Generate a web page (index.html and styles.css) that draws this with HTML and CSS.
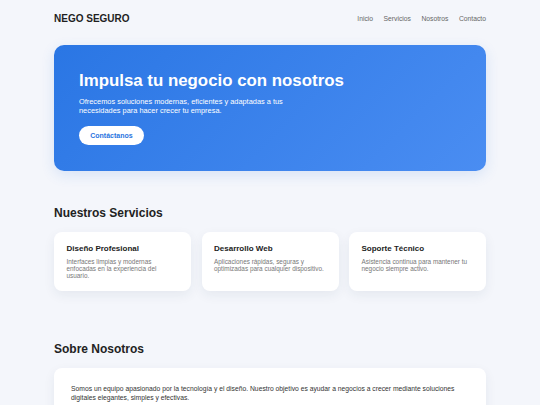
FILE: index.html
```html
<!DOCTYPE html>
<html lang="es">
<head>
<meta charset="utf-8">
<title>Nego Seguro</title>
<link rel="stylesheet" href="styles.css">
</head>
<body>
<div class="container">
  <header class="header">
    <div class="logo">NEGO SEGURO</div>
    <nav class="nav">
      <a href="#">Inicio</a>
      <a href="#">Servicios</a>
      <a href="#">Nosotros</a>
      <a href="#">Contacto</a>
    </nav>
  </header>

  <section class="hero">
    <h1 class="hero-title">Impulsa tu negocio con nosotros</h1>
    <p class="hero-text">Ofrecemos soluciones modernas, eficientes y adaptadas a tus necesidades para hacer crecer tu empresa.</p>
    <a class="btn" href="#">Contáctanos</a>
  </section>

  <section class="section">
    <h2 class="section-title">Nuestros Servicios</h2>
    <div class="cards">
      <div class="card">
        <h3 class="card-title">Diseño Profesional</h3>
        <p class="card-text">Interfaces limpias y modernas enfocadas en la experiencia del usuario.</p>
      </div>
      <div class="card">
        <h3 class="card-title">Desarrollo Web</h3>
        <p class="card-text">Aplicaciones rápidas, seguras y optimizadas para cualquier dispositivo.</p>
      </div>
      <div class="card">
        <h3 class="card-title">Soporte Técnico</h3>
        <p class="card-text">Asistencia continua para mantener tu negocio siempre activo.</p>
      </div>
    </div>
  </section>

  <section class="section">
    <h2 class="section-title">Sobre Nosotros</h2>
    <div class="about">
      <p class="about-text">Somos un equipo apasionado por la tecnología y el diseño. Nuestro objetivo es ayudar a negocios a crecer mediante soluciones digitales elegantes, simples y efectivas.</p>
    </div>
  </section>
</div>
</body>
</html>
```

FILE: styles.css
```css
* { box-sizing: border-box; }

body {
  margin: 0;
  background: #f4f6fb;
  font-family: "Liberation Sans", Arial, sans-serif;
  color: #222;
}

.container {
  width: 432px;
  margin: 0 auto;
}

.header {
  height: 36px;
  display: flex;
  align-items: center;
  justify-content: space-between;
}

.logo {
  font-size: 10px;
  font-weight: 700;
  color: #1f1f1f;
}

.nav {
  display: flex;
  gap: 10.5px;
}

.nav a {
  font-size: 6.75px;
  color: #666;
  text-decoration: none;
}

.hero {
  margin-top: 9px;
  padding: 26px 25px 26px;
  border-radius: 10px;
  background: linear-gradient(135deg, #2a76e4 0%, #4a8df2 100%);
  box-shadow: 0 4px 14px rgba(40, 110, 220, 0.14);
  color: #fff;
}

.hero-title {
  margin: 0;
  font-size: 16.85px;
  font-weight: 700;
  line-height: normal;
}

.hero-text {
  margin: 7px 0 0;
  max-width: 225px;
  font-size: 7.4px;
  line-height: 8.6px;
}

.btn {
  display: inline-block;
  margin-top: 11px;
  padding: 5.5px 11.2px;
  border-radius: 999px;
  background: #fff;
  color: #2a74e0;
  font-size: 7px;
  font-weight: 700;
  line-height: 8px;
  text-decoration: none;
}

.section {
  padding: 34.6px 0 16px;
}

.section-title {
  margin: 0 0 12.5px;
  font-size: 12px;
  font-weight: 700;
  line-height: normal;
  color: #222;
}

.cards {
  display: grid;
  grid-template-columns: repeat(3, 1fr);
  gap: 10.5px;
}

.card {
  background: #fff;
  border-radius: 8px;
  padding: 12px 12.5px 12.5px;
  box-shadow: 0 4px 12px rgba(30, 50, 90, 0.07);
}

.card-title {
  margin: 0;
  font-size: 8px;
  font-weight: 700;
  line-height: normal;
  color: #222;
}

.card-text {
  margin: 4.3px 0 0;
  font-size: 6.4px;
  line-height: 7px;
  color: #777;
}

.about {
  background: #fff;
  border-radius: 8px;
  padding: 15.5px 17px 16px;
  box-shadow: 0 4px 12px rgba(30, 50, 90, 0.07);
}

.about-text {
  margin: 0;
  font-size: 6.75px;
  line-height: 9px;
  color: #333;
}
```
